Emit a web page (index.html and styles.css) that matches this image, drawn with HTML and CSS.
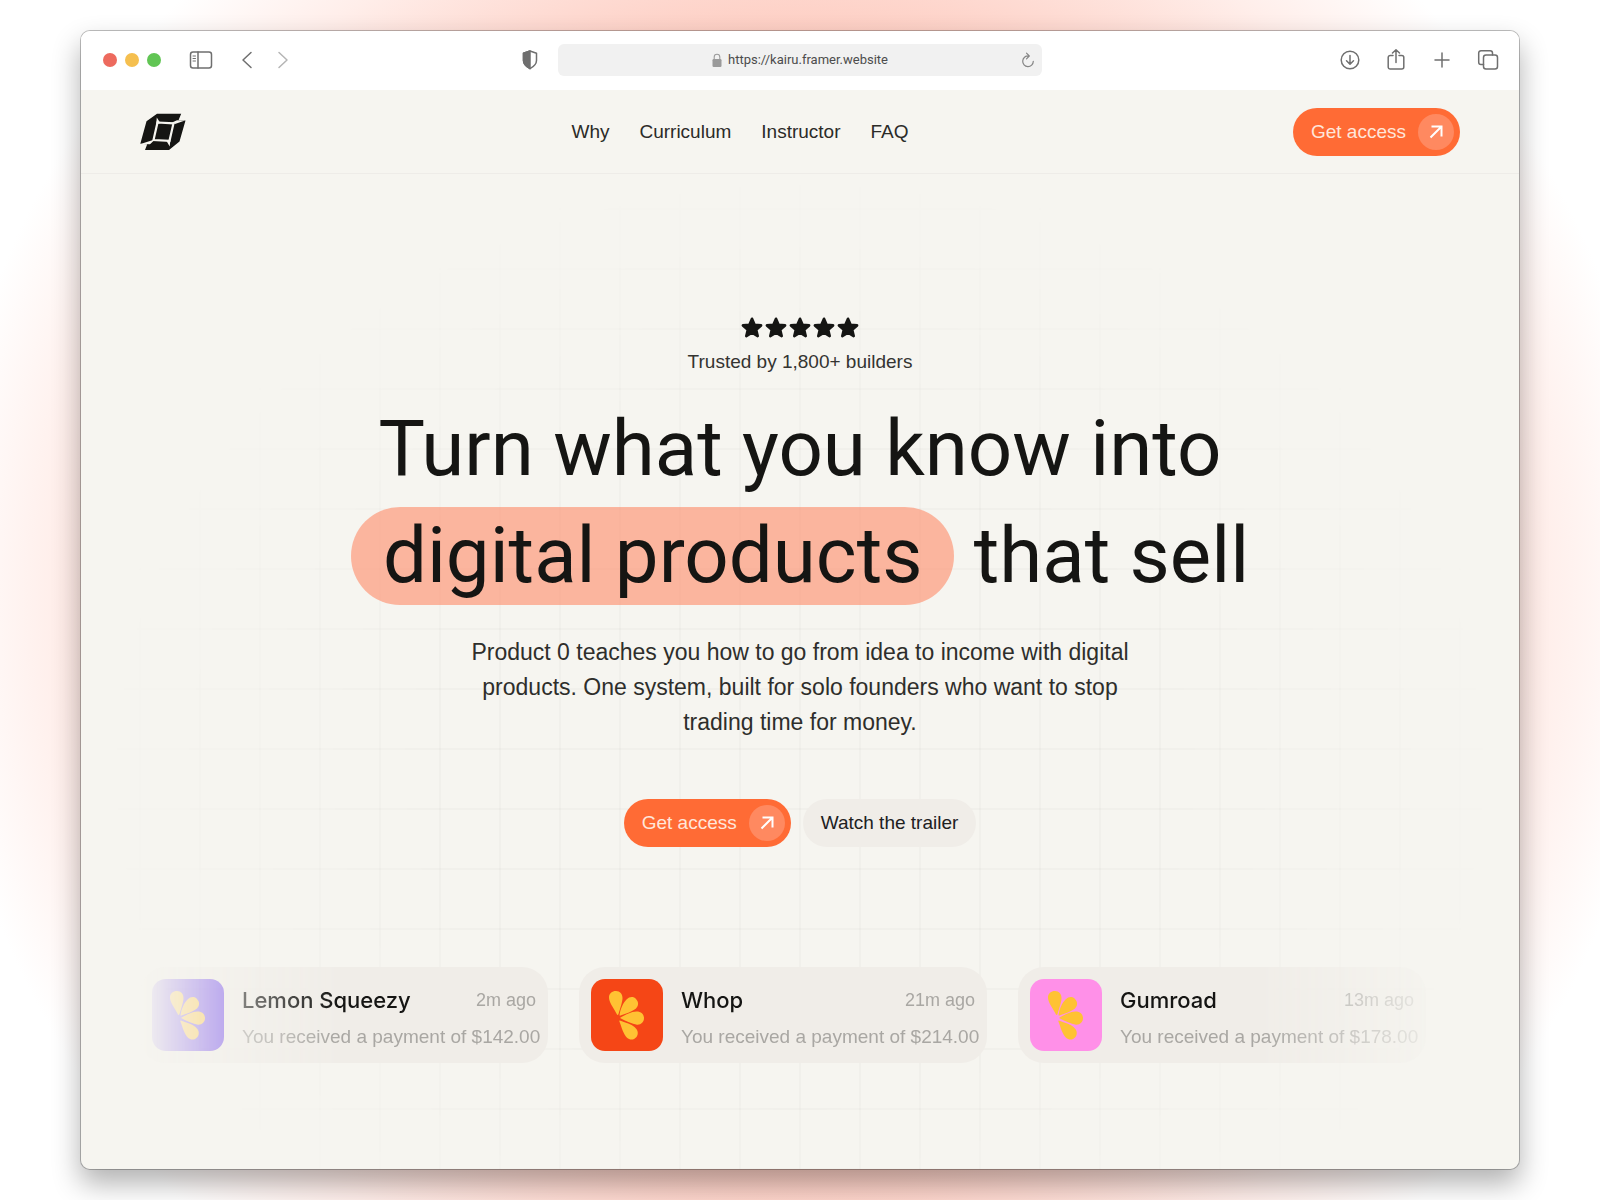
FILE: index.html
```
<!DOCTYPE html>
<html lang="en">
<head>
    <meta charset="UTF-8">
    <meta name="viewport" content="width=device-width, initial-scale=1.0">
    <title>Product 0</title>
    <link rel="stylesheet" href="styles.css">
</head>
<body>

    <svg class="sprite" aria-hidden="true">
        <symbol id="star" viewBox="0 0 24 24">
            <path d="M12 2.800l2.600 6 6.500.6-4.900 4.300 1.500 6.400-5.700-3.400-5.700 3.400 1.500-6.400-4.900-4.300 6.500-.6z" fill="currentColor" stroke="currentColor" stroke-width="2.600" stroke-linejoin="round"/>
        </symbol>
        <symbol id="arrow" viewBox="0 0 16 16">
            <path d="M2.500 13.500L13 3M3.500 2.500h10V12.500" fill="none" stroke="currentColor" stroke-width="2"/>
        </symbol>
        <symbol id="petals" viewBox="0 0 72 72">
            <g fill="currentColor">
                <path d="M26 35.500C22 28 18 23 18 18.500C18 14.500 21 12 25 12C29 12 31.500 15 31.500 19C31.500 23 29 30 27.500 35Q26.800 36.500 26 35.500Z"/>
                <path d="M28.600 35.600C29.500 30 32 24 35.500 20.500C38.500 17.500 42.500 17.200 45 20C47.800 23 47.800 26.500 45 29.500C41.500 32.500 35 34.500 29.500 36.500Q28.200 37 28.600 35.600Z"/>
                <path d="M30 38.300C35 35.500 40 32.400 45.500 32.400C50 32.400 53 35 53 39C53 43 50 46 46 45.700C41 45.200 35 42 30 39.600Q28.600 39 30 38.300Z"/>
                <path d="M29.500 41.700C35 43.800 40 45 43.500 48C47 51 47.800 54.500 45.500 58C43 61 39 61.500 36 58.800C32.500 55.500 30.500 48 28.400 42.600Q28 41 29.500 41.700Z"/>
            </g>
        </symbol>
    </svg>

    <div class="window">
        <div class="toolbar">
            <div class="toolbar-left">
                <span class="dot red"></span>
                <span class="dot yellow"></span>
                <span class="dot green"></span>
                <button class="tool sidebar" aria-label="Sidebar">
                    <svg width="24" height="24" viewBox="0 0 24 24"><rect x="1.500" y="4" width="21" height="16" rx="2.500"/><path d="M9 4v16"/><path d="M4 8h2.500M4 10.500h2.500M4 13h2.500" stroke-width="1"/></svg>
                </button>
                <button class="tool back" aria-label="Back">
                    <svg width="20" height="20" viewBox="0 0 20 20"><path d="M14 2.500L6 10l8 7.500"/></svg>
                </button>
                <button class="tool forward" aria-label="Forward">
                    <svg width="20" height="20" viewBox="0 0 20 20"><path d="M6 2.500L14 10l-8 7.500"/></svg>
                </button>
            </div>
            <div class="toolbar-center">
                <button class="tool" aria-label="Privacy report">
                    <svg width="20" height="20" viewBox="0 0 20 20"><path d="M10 1l6.500 2.300v7.200c0 4-3.500 6.500-6.500 8.200-3-1.700-6.500-4.200-6.500-8.200V3.300z"/><path d="M10 1L3.500 3.300v7.200c0 4 3.500 6.500 6.500 8.200z" fill="currentColor"/></svg>
                </button>
                <div class="address">
                    <svg class="lock" width="10" height="14" viewBox="0 0 10 14"><rect x="0.500" y="6" width="9" height="8" rx="1.200" fill="currentColor"/><path d="M2.200 6.500V4a2.800 2.800 0 0 1 5.600 0v2.500" fill="none" stroke="currentColor" stroke-width="1.100"/></svg>
                    <span>https://kairu.framer.website</span>
                    <button class="tool reload" aria-label="Reload">
                        <svg width="14" height="16" viewBox="0 0 14 16"><path d="M7.500 4A5.300 5.300 0 1 0 12.300 9.300M5.500 1.200L8.300 4 5.500 6.800" stroke-width="1.200"/></svg>
                    </button>
                </div>
            </div>
            <div class="toolbar-right">
                <button class="tool" aria-label="Downloads">
                    <svg width="22" height="22" viewBox="0 0 22 22"><circle cx="11" cy="11" r="8.800"/><path d="M11 6.500v8.500M7.500 11.800l3.500 3.400 3.500-3.400"/></svg>
                </button>
                <button class="tool" aria-label="Share">
                    <svg width="22" height="22" viewBox="0 0 22 22"><path d="M8 6.500H5.200A2 2 0 0 0 3.200 8.500v9.500a2 2 0 0 0 2 2h11.600a2 2 0 0 0 2-2V8.500a2 2 0 0 0-2-2H14M11 13.500V1M7.500 4L11 .8 14.500 4"/></svg>
                </button>
                <button class="tool" aria-label="New tab">
                    <svg width="22" height="22" viewBox="0 0 22 22"><path d="M11 4v14M4 11h14"/></svg>
                </button>
                <button class="tool" aria-label="Tab overview">
                    <svg width="22" height="22" viewBox="0 0 22 22"><rect x="6.500" y="6" width="14" height="14" rx="2.500"/><path d="M6.500 15.500H4a2.300 2.300 0 0 1-2.300-2.300V4A2.300 2.300 0 0 1 4 1.700h9.200A2.300 2.300 0 0 1 15.500 4v2"/></svg>
                </button>
            </div>
        </div>

        <header class="site-header">
            <a href="#" class="logo" aria-label="Product 0">
                <svg width="46" height="38" viewBox="0 0 46 38">
                    <path d="M17 .8h24.200L38.500 7.300l7 .2-6 21L29 37H5l2.200-5.800L.3 30.800 6.500 8.300z" fill="currentColor"/>
                    <path d="M17.500 9.500l16 .8L29.500 27.800l-16-.8z" fill="none" stroke="#f6f5f0" stroke-width="2.200"/>
                    <path d="M32 9.500l5-2.200 8 .2-10 3.500zM15 26.500l-5 4.800-9.500-.3 11-3.500zM16.200 11l.6-6.500 3.500 5.500zM30.500 26.500l-.8 7-3.500-6z" fill="#f6f5f0"/>
                </svg>
            </a>
            <nav class="nav">
                <a href="#why">Why</a>
                <a href="#curriculum">Curriculum</a>
                <a href="#instructor">Instructor</a>
                <a href="#faq">FAQ</a>
            </nav>
            <button class="btn btn-primary">Get access <span class="btn-icon"><svg width="16" height="16"><use href="#arrow"/></svg></span></button>
        </header>

        <main class="hero">
            <div class="stars">
                <svg><use href="#star"/></svg>
                <svg><use href="#star"/></svg>
                <svg><use href="#star"/></svg>
                <svg><use href="#star"/></svg>
                <svg><use href="#star"/></svg>
            </div>
            <p class="trusted">Trusted by 1,800+ builders</p>
            <h1>Turn what you know into<br><span class="highlight">digital products</span> that sell</h1>
            <p class="lead">Product 0 teaches you how to go from idea to income with digital products. One system, built for solo founders who want to stop trading time for money.</p>
            <div class="actions">
                <button class="btn btn-primary">Get access <span class="btn-icon"><svg width="16" height="16"><use href="#arrow"/></svg></span></button>
                <button class="btn btn-light">Watch the trailer</button>
            </div>

            <div class="ticker">
                <article class="card">
                    <div class="app-icon lemon"><svg><use href="#petals"/></svg></div>
                    <div class="card-body">
                        <div class="card-top"><h2>Lemon Squeezy</h2><time>2m ago</time></div>
                        <p>You received a payment of $142.00</p>
                    </div>
                </article>
                <article class="card">
                    <div class="app-icon whop"><svg><use href="#petals"/></svg></div>
                    <div class="card-body">
                        <div class="card-top"><h2>Whop</h2><time>21m ago</time></div>
                        <p>You received a payment of $214.00</p>
                    </div>
                </article>
                <article class="card">
                    <div class="app-icon gumroad"><svg><use href="#petals"/></svg></div>
                    <div class="card-body">
                        <div class="card-top"><h2>Gumroad</h2><time>13m ago</time></div>
                        <p>You received a payment of $178.00</p>
                    </div>
                </article>
            </div>
        </main>
    </div>

</body>
</html>
```
FILE: styles.css
```
* {
    box-sizing: border-box;
}

body {
    margin: 0;
    padding: 30px 80px;
    min-height: 100vh;
    display: flex;
    font-family: "Liberation Sans", Arial, sans-serif;
    color: #151513;
    background: radial-gradient(ellipse 54% 72% at 50% 50%, #fbb9a9 0%, #fdc6b9 60%, #ffeeea 86%, #fff 100%) #fff;
}

h1, h2, p {
    margin: 0;
    font-weight: 400;
}

button {
    font: inherit;
    border: none;
    cursor: pointer;
}

.sprite {
    position: absolute;
    width: 0;
    height: 0;
}

.window {
    flex: 1;
    display: flex;
    flex-direction: column;
    overflow: hidden;
    border: 1px solid rgba(0, 0, 0, 0.25);
    border-radius: 10px;
    background: #f6f5f0;
    background-clip: padding-box;
    box-shadow: 0 14px 28px rgba(0, 0, 0, 0.3);
}

/* Browser toolbar */
.toolbar {
    display: grid;
    grid-template-columns: 1fr auto 1fr;
    align-items: center;
    height: 59px;
    padding: 0 20px 2px 22px;
    background: #fff;
    color: #6f6f6f;
}

.toolbar-left,
.toolbar-center,
.toolbar-right {
    display: flex;
    align-items: center;
}

.toolbar-left {
    gap: 8px;
}

.toolbar-center {
    gap: 18px;
    margin-right: 40px;
}

.toolbar-right {
    justify-content: flex-end;
    gap: 24px;
}

.dot {
    width: 14px;
    height: 14px;
    border-radius: 50%;
}

.red {
    background: #ed6a5e;
}

.yellow {
    background: #f5bf4f;
}

.green {
    background: #61c554;
}

.tool {
    display: flex;
    padding: 0;
    background: none;
    color: inherit;
}

.tool svg {
    fill: none;
    stroke: currentColor;
    stroke-width: 1.5;
    stroke-linecap: round;
    stroke-linejoin: round;
}

.sidebar {
    margin: 0 16px 0 20px;
}

.forward {
    margin-left: 8px;
    color: #b5b5b5;
}

.address {
    position: relative;
    display: flex;
    align-items: center;
    justify-content: center;
    gap: 6px;
    width: 484px;
    height: 32px;
    border-radius: 6px;
    background: #f1f1f1;
    font: 13px Roboto, sans-serif;
    color: #4c4c4c;
}

.lock {
    color: #9a9a9a;
}

.reload {
    position: absolute;
    right: 7px;
    color: #858585;
}

/* Site header */
.site-header {
    display: grid;
    grid-template-columns: 1fr auto 1fr;
    align-items: center;
    height: 84px;
    padding: 0 59px;
    border-bottom: 1px solid #eeece8;
}

.logo {
    display: flex;
    color: #151513;
}

.nav {
    display: flex;
    gap: 30px;
    margin-right: 120px;
}

.nav a {
    font-size: 19px;
    color: #2b2b28;
    text-decoration: none;
}

.site-header .btn {
    justify-self: end;
}

.btn {
    display: flex;
    align-items: center;
    gap: 12px;
    height: 48px;
    padding: 0 18px;
    border-radius: 24px;
    font-size: 19px;
}

.btn-primary {
    padding-right: 6px;
    background: #ff6b35;
    color: #ffe6da;
}

.btn-light {
    background: #f0ede8;
    color: #20201e;
}

.btn-icon {
    display: flex;
    align-items: center;
    justify-content: center;
    width: 36px;
    height: 36px;
    border-radius: 50%;
    background: #ff8960;
    color: #fff;
}

/* Hero */
.hero {
    position: relative;
    z-index: 0;
    flex: 1;
    display: flex;
    flex-direction: column;
    align-items: center;
    padding: 142px 59px 0;
    text-align: center;
}

/* Faded grid behind the content */
.hero::before {
    content: "";
    position: absolute;
    z-index: -1;
    inset: 0;
    background:
        linear-gradient(90deg, rgba(0, 0, 0, 0.02) 2px, transparent 2px) -2px 0 / 60px 60px,
        linear-gradient(rgba(0, 0, 0, 0.02) 2px, transparent 2px) 0 34px / 60px 60px;
    mask-image: radial-gradient(ellipse 50% 62% at 50% 60%, #000 50%, transparent 100%);
}

.stars {
    display: flex;
}

.stars svg {
    width: 24px;
    height: 24px;
}

.trusted {
    margin-top: 10px;
    font-size: 19px;
    line-height: 24px;
    color: #343431;
}

h1 {
    margin-top: 21px;
    font: 400 78px/107px Roboto, sans-serif;
}

.highlight {
    display: inline-block;
    padding: 0 32px;
    border-radius: 49px;
    line-height: 98px;
    background: rgba(255, 138, 104, 0.6);
}

.lead {
    max-width: 700px;
    margin-top: 26px;
    font-size: 23px;
    line-height: 35px;
    color: #2e2e2b;
}

.actions {
    display: flex;
    gap: 12px;
    margin-top: 59px;
}

/* Payment cards */
.ticker {
    display: flex;
    gap: 31px;
    width: 100%;
    margin-top: 120px;
    overflow: hidden;
    mask-image: linear-gradient(90deg, transparent, #000 15%, #000 85%, transparent);
}

.card {
    display: flex;
    flex: none;
    gap: 18px;
    width: 408px;
    padding: 12px;
    border-radius: 26px;
    background: #f0ede8;
    text-align: left;
}

.app-icon {
    flex: none;
    width: 72px;
    height: 72px;
    border-radius: 14px;
    color: #ffc233;
}

.app-icon svg {
    display: block;
    width: 72px;
    height: 72px;
}

.lemon {
    background: #7047eb;
}

.whop {
    background: #f54616;
}

.gumroad {
    background: #ff90e8;
}

.card-body {
    flex: 1;
    min-width: 0;
    display: flex;
    flex-direction: column;
    justify-content: space-between;
    padding: 7px 0 1px;
}

.card-top {
    display: flex;
    justify-content: space-between;
    align-items: center;
}

h2 {
    font: 500 22px/28px Inter, sans-serif;
}

.card time {
    font-size: 18px;
    color: #a9a7a3;
}

.card p {
    font-size: 19px;
    line-height: 26px;
    color: #a9a7a3;
    white-space: nowrap;
}
```
